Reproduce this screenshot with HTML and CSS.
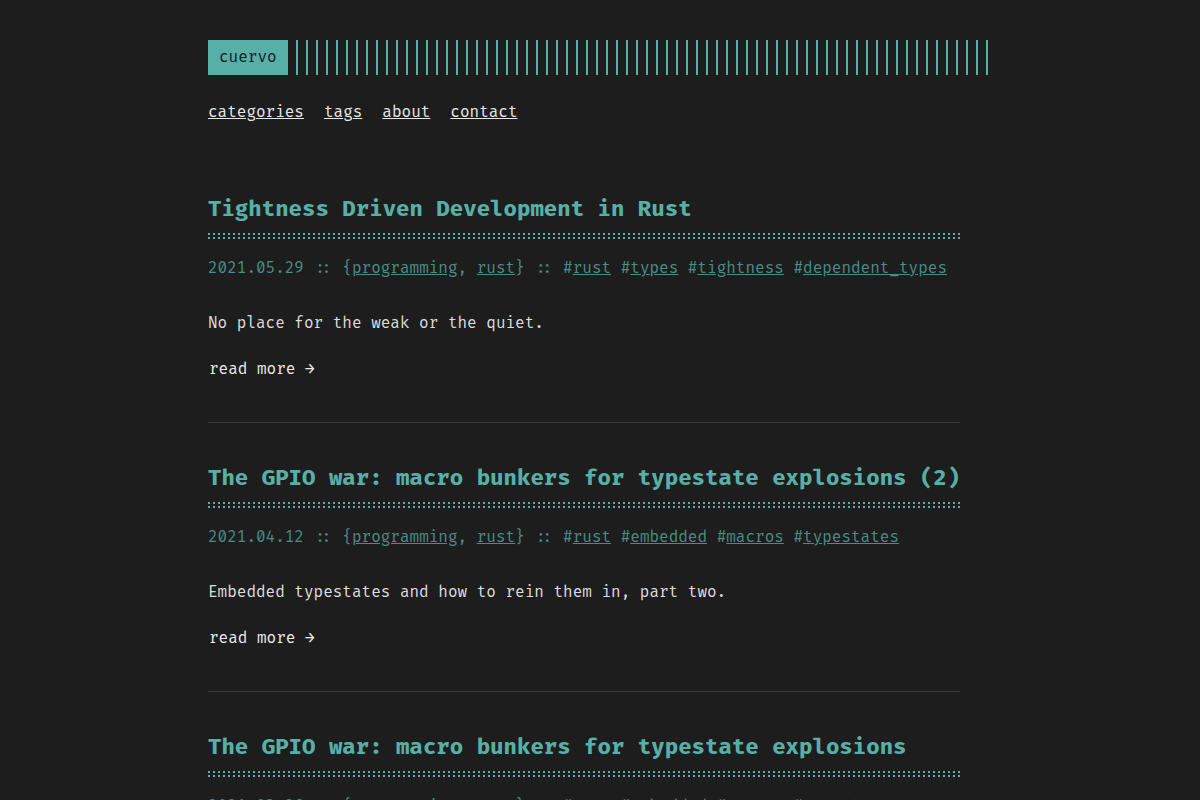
FILE: index.html
```html
<!DOCTYPE html>
<html lang="en">
<head>
    <meta charset="UTF-8">
    <meta name="viewport" content="width=device-width, initial-scale=1.0">
    <title>cuervo</title>
    <link rel="stylesheet" href="styles.css">
</head>
<body>
    <div class="container">
        <header class="header">
            <div class="header__logo">
                <a class="logo" href="#">cuervo</a>
            </div>
            <nav class="menu">
                <a href="#">categories</a>
                <a href="#">tags</a>
                <a href="#">about</a>
                <a href="#">contact</a>
            </nav>
        </header>

        <div class="posts">
            <article class="post">
                <h1 class="post-title"><a href="#">Tightness Driven Development in Rust</a></h1>
                <div class="post-meta">
                    2021.05.29 :: {<a href="#">programming</a>, <a href="#">rust</a>} ::
                    #<a href="#">rust</a> #<a href="#">types</a> #<a href="#">tightness</a> #<a href="#">dependent_types</a>
                </div>
                <p class="post-content">No place for the weak or the quiet.</p>
                <a class="read-more" href="#">read more →</a>
            </article>

            <article class="post">
                <h1 class="post-title"><a href="#">The GPIO war: macro bunkers for typestate explosions (2)</a></h1>
                <div class="post-meta">
                    2021.04.12 :: {<a href="#">programming</a>, <a href="#">rust</a>} ::
                    #<a href="#">rust</a> #<a href="#">embedded</a> #<a href="#">macros</a> #<a href="#">typestates</a>
                </div>
                <p class="post-content">Embedded typestates and how to rein them in, part two.</p>
                <a class="read-more" href="#">read more →</a>
            </article>

            <article class="post">
                <h1 class="post-title"><a href="#">The GPIO war: macro bunkers for typestate explosions</a></h1>
                <div class="post-meta">
                    2021.03.26 :: {<a href="#">programming</a>, <a href="#">rust</a>} ::
                    #<a href="#">rust</a> #<a href="#">embedded</a> #<a href="#">macros</a> #<a href="#">typestates</a>
                </div>
                <p class="post-content">Embedded typestates and how to rein them in, part one.</p>
                <a class="read-more" href="#">read more →</a>
            </article>
        </div>
    </div>
</body>
</html>
```

FILE: styles.css
```css
:root {
    --background: #1d1d1d;
    --foreground: #e2e2e2;
    --accent: #57b0a8;
    --accent-dim: #4a8c86;
    --border: #3a3a3a;
}
body {
    margin: 0;
    background-color: var(--background);
    color: var(--foreground);
    font-family: "Fira Code", "DejaVu Sans Mono", monospace;
    font-size: 15.6px;
    line-height: 24px;
}
a {
    color: inherit;
}
.container {
    max-width: 864px;
    margin: 0 auto;
    padding: 40px;
    box-sizing: border-box;
}
.header__logo {
    display: flex;
}
.header__logo:after {
    content: "";
    flex: 1;
    margin-left: 8px;
    background: repeating-linear-gradient(90deg, var(--accent) 0 2px, transparent 2px 10px);
}
.logo {
    background: var(--accent);
    color: #1a1a1a;
    padding: 5px 11px;
    line-height: 25px;
    text-decoration: none;
}
.menu {
    display: flex;
    gap: 20px;
    margin-top: 26px;
}
.menu a {
    color: #e6e6e6;
}
.posts {
    max-width: 752px;
    margin-top: 70px;
}
.post {
    padding-bottom: 40px;
    border-bottom: 1px solid var(--border);
    margin-bottom: 41px;
}
.post-title {
    margin: 0;
    font-size: 21.84px;
    line-height: 30px;
    color: var(--accent);
    white-space: nowrap;
}
.post-title a {
    text-decoration: none;
}
/* two rows of dots under the title; the middle strip hides one row of the dotted pattern */
.post-title:after {
    content: "";
    display: block;
    height: 6px;
    margin-top: 8px;
    background:
        linear-gradient(var(--background), var(--background)) 0 2px / 100% 2px no-repeat,
        repeating-linear-gradient(90deg, #5cb0a8 0 2px, transparent 2px 5px);
}
.post-meta {
    margin-top: 18px;
    color: var(--accent-dim);
}
.post-content {
    margin: 31px 0 22px;
    color: #dcdcdc;
}
.read-more {
    display: inline-block;
    text-decoration: none;
    color: #eaeaea;
    margin-left: 1px;
}
```
